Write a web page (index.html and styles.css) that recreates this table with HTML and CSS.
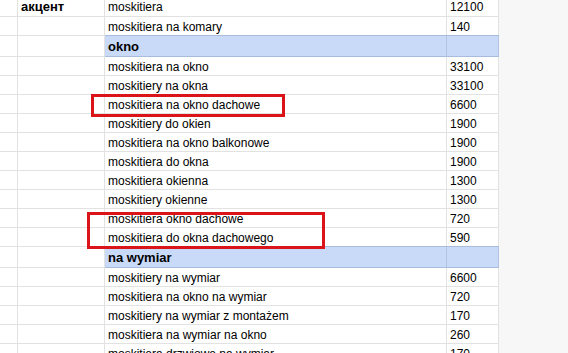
FILE: index.html
```html
<!DOCTYPE html>
<html lang="pl">
<head>
<meta charset="utf-8">
<title>Arkusz</title>
<link rel="stylesheet" href="styles.css">
</head>
<body>
<div class="sheet">
  <div class="row first"><div class="c c0"></div><div class="c c1 b">акцент</div><div class="c c2">moskitiera</div><div class="c c3">12100</div></div>
  <div class="row"><div class="c c0"></div><div class="c c1"></div><div class="c c2">moskitiera na komary</div><div class="c c3">140</div></div>
  <div class="row head"><div class="c c0"></div><div class="c c1"></div><div class="c c2 blue b">okno</div><div class="c c3 blue"></div></div>
  <div class="row"><div class="c c0"></div><div class="c c1"></div><div class="c c2">moskitiera na okno</div><div class="c c3">33100</div></div>
  <div class="row"><div class="c c0"></div><div class="c c1"></div><div class="c c2">moskitiery na okna</div><div class="c c3">33100</div></div>
  <div class="row"><div class="c c0"></div><div class="c c1"></div><div class="c c2">moskitiera na okno dachowe</div><div class="c c3">6600</div></div>
  <div class="row"><div class="c c0"></div><div class="c c1"></div><div class="c c2">moskitiery do okien</div><div class="c c3">1900</div></div>
  <div class="row"><div class="c c0"></div><div class="c c1"></div><div class="c c2">moskitiera na okno balkonowe</div><div class="c c3">1900</div></div>
  <div class="row"><div class="c c0"></div><div class="c c1"></div><div class="c c2">moskitiera do okna</div><div class="c c3">1900</div></div>
  <div class="row"><div class="c c0"></div><div class="c c1"></div><div class="c c2">moskitiera okienna</div><div class="c c3">1300</div></div>
  <div class="row"><div class="c c0"></div><div class="c c1"></div><div class="c c2">moskitiery okienne</div><div class="c c3">1300</div></div>
  <div class="row"><div class="c c0"></div><div class="c c1"></div><div class="c c2">moskitiera okno dachowe</div><div class="c c3">720</div></div>
  <div class="row"><div class="c c0"></div><div class="c c1"></div><div class="c c2">moskitiera do okna dachowego</div><div class="c c3">590</div></div>
  <div class="row head"><div class="c c0"></div><div class="c c1"></div><div class="c c2 blue b">na wymiar</div><div class="c c3 blue"></div></div>
  <div class="row"><div class="c c0"></div><div class="c c1"></div><div class="c c2">moskitiery na wymiar</div><div class="c c3">6600</div></div>
  <div class="row"><div class="c c0"></div><div class="c c1"></div><div class="c c2">moskitiera na okno na wymiar</div><div class="c c3">720</div></div>
  <div class="row"><div class="c c0"></div><div class="c c1"></div><div class="c c2">moskitiery na wymiar z montażem</div><div class="c c3">170</div></div>
  <div class="row"><div class="c c0"></div><div class="c c1"></div><div class="c c2">moskitiera na wymiar na okno</div><div class="c c3">260</div></div>
  <div class="row"><div class="c c0"></div><div class="c c1"></div><div class="c c2">moskitiera drzwiowe na wymiar</div><div class="c c3">170</div></div>

  <div class="mark mark1"></div>
  <div class="mark mark2"></div>
</div>
</body>
</html>
```

FILE: styles.css
```css
html, body {
  margin: 0;
  padding: 0;
  background: #f6f7f6;
  overflow: hidden;
}

.sheet {
  position: relative;
  width: 499px;
  background: #ffffff;
  display: flex;
  flex-direction: column;
  font-family: "Liberation Sans", Arial, sans-serif;
  font-size: 12px;
  color: #000;
}

.row {
  display: grid;
  grid-template-columns: 18px 87px 342px 52px;
  height: 19px;
  flex: none;
}

.row.first {
  height: 17px;
}

.row.head {
  height: 21px;
}

.c {
  box-sizing: border-box;
  border-right: 1px solid #e2e2e2;
  border-bottom: 1px solid #e2e2e2;
  padding: 1px 0 0 3px;
  line-height: 18px;
  white-space: nowrap;
  overflow: hidden;
}

.row.first .c {
  padding-top: 0;
  line-height: 14px;
}

.b {
  font-weight: bold;
  font-size: 13px;
}

.row.head .c {
  padding-top: 2px;
}

.blue {
  background: #c9daf8;
  border-bottom-color: #a9bcdd;
  border-right-color: #b3c4e2;
  box-shadow: 0 -1px 0 #a9bcdd;
}

.mark {
  position: absolute;
  box-sizing: border-box;
  border: 3px solid #da1418;
}

.mark1 {
  left: 91px;
  top: 94px;
  width: 194px;
  height: 23px;
}

.mark2 {
  left: 87px;
  top: 212px;
  width: 238px;
  height: 37px;
}
```
